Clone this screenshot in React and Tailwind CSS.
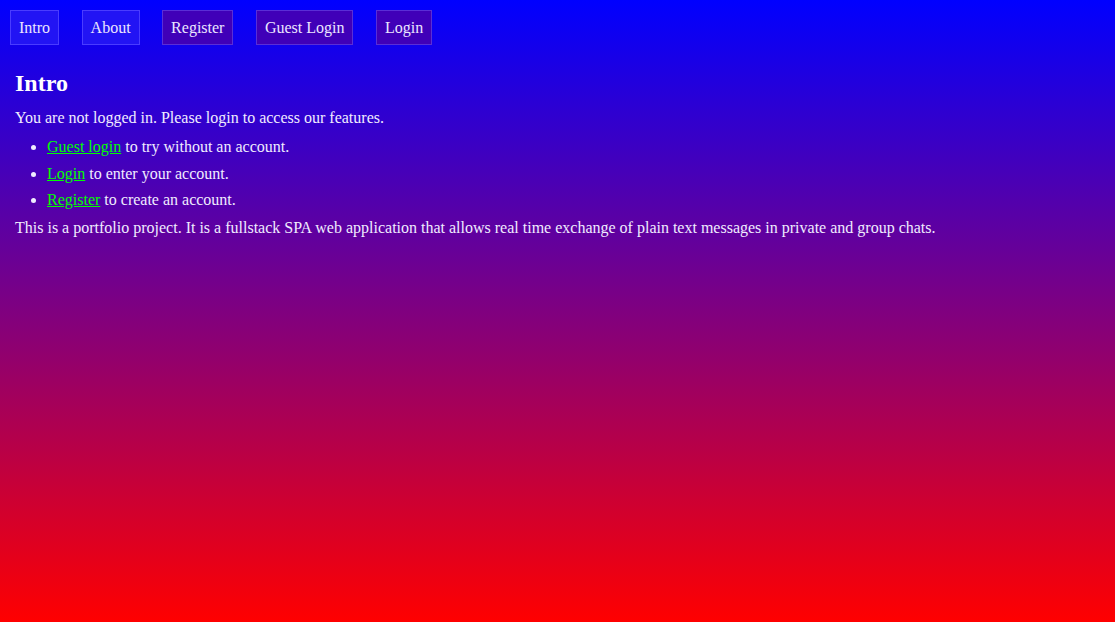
import React from "react";

function NavButton({ children, active }) {
  return (
    <button
      className={
        active
          ? "px-2 py-2 border border-[#4a3cff] bg-[#2214f4] text-[#ebe6ff] leading-[17px]"
          : "px-2 py-2 border border-[#5a2ed6] bg-[#4000b8] text-[#ebe6ff] leading-[17px]"
      }
    >
      {children}
    </button>
  );
}

function App() {
  return (
    <div className="min-h-screen w-full bg-[linear-gradient(to_bottom,#0000ff,#ff0000)] text-[#f0ecff] font-['Liberation_Serif',serif] text-base">
      <nav className="flex gap-[22.5px] px-[10px] pt-[10px]">
        <NavButton active>Intro</NavButton>
        <NavButton active>About</NavButton>
        <NavButton>Register</NavButton>
        <NavButton>Guest Login</NavButton>
        <NavButton>Login</NavButton>
      </nav>

      <main className="px-[15px] pt-[24px]">
        <h2 className="text-2xl font-bold text-white leading-[28px]">Intro</h2>
        <p className="mt-[12px] leading-[18px]">
          You are not logged in. Please login to access our features.
        </p>
        <ul className="list-disc pl-8 mt-[7px]">
          <li className="py-[4px] leading-[18.5px]">
            <a href="#" className="text-[#00ff00] underline">Guest login</a> to try without an account.
          </li>
          <li className="py-[4px] leading-[18.5px]">
            <a href="#" className="text-[#00ff00] underline">Login</a> to enter your account.
          </li>
          <li className="py-[4px] leading-[18.5px]">
            <a href="#" className="text-[#00ff00] underline">Register</a> to create an account.
          </li>
        </ul>
        <p className="mt-[5px] leading-[18px]">
          This is a portfolio project. It is a fullstack SPA web application that allows real time exchange of plain text messages in private and group chats.
        </p>
      </main>
    </div>
  );
}

export default App;
